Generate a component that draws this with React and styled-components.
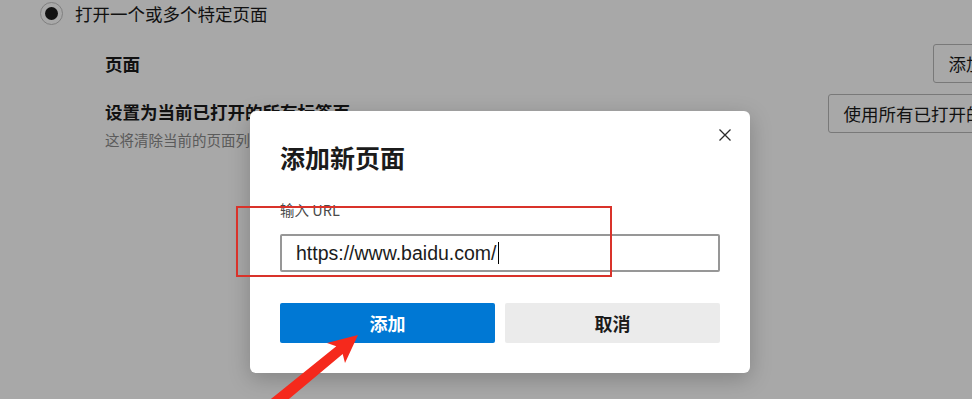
import React from 'react';
import styled, { createGlobalStyle } from 'styled-components';

/* colours */
const ink = '#1b1b1b';
const muted = '#8a8a8a';
const blue = '#0078d4';
const annotation = '#d9322a';

const GlobalStyle = createGlobalStyle`
    html, body {
        margin: 0;
        padding: 0;
    }
    body {
        width: 972px;
        height: 399px;
        overflow: hidden;
        background: #fff;
        font-family: "Noto Sans CJK SC", "Noto Sans", sans-serif;
        color: ${ink};
    }
`;

const Page = styled.div`
    position: relative;
    width: 972px;
    height: 399px;
    overflow: hidden;
    background: #fff;
`;

/* settings page behind the dialog */
const RadioRow = styled.label`
    display: flex;
    align-items: center;
    gap: 12px;
    height: 27px;
    padding-left: 40px;
    font-size: 17.5px;
`;

const Radio = styled.span`
    width: 23px;
    height: 23px;
    box-sizing: border-box;
    border: 1px solid #c2c2c2;
    border-radius: 50%;
    display: flex;
    align-items: center;
    justify-content: center;

    &:after {
        content: '';
        width: 13px;
        height: 13px;
        border-radius: 50%;
        background: ${ink};
    }
`;

const SubList = styled.div`
    margin: 17px 0 0 105px;
    width: 947px;
    display: flex;
    flex-direction: column;
    gap: 11px;
`;

const SettingRow = styled.div`
    display: flex;
    justify-content: space-between;
    align-items: ${p => (p.$top ? 'flex-start' : 'center')};
`;

const SettingText = styled.div`
    display: flex;
    flex-direction: column;
    margin-top: ${p => p.$offset || 0}px;
`;

const SettingTitle = styled.div`
    font-size: 17.5px;
    font-weight: 700;
    line-height: 22px;
`;

const SettingHint = styled.div`
    margin-top: 7px;
    font-size: 14.5px;
    line-height: 20px;
    color: ${muted};
`;

const OutlineButton = styled.button`
    height: 39px;
    padding: 0 15px;
    border: 1px solid #b8b8b8;
    border-radius: 3px;
    background: transparent;
    font-family: inherit;
    font-size: 17.5px;
    color: ${ink};
    white-space: nowrap;
`;

/* modal */
const Overlay = styled.div`
    position: absolute;
    inset: 0;
    background: rgba(0, 0, 0, 0.34);
`;

const Dialog = styled.div`
    position: absolute;
    left: 250px;
    top: 111px;
    width: 500px;
    box-sizing: border-box;
    padding: 30px;
    background: #fff;
    border-radius: 6px;
    box-shadow: 0 6px 22px rgba(0, 0, 0, 0.22);
`;

const Close = styled.button`
    position: absolute;
    top: 16px;
    right: 17px;
    width: 16px;
    height: 16px;
    padding: 0;
    border: none;
    background: none;
    display: flex;
    align-items: center;
    justify-content: center;
`;

const Title = styled.h2`
    margin: 0;
    font-size: 25px;
    line-height: 32px;
    font-weight: 700;
    color: ${ink};
`;

const FieldLabel = styled.div`
    margin-top: 27px;
    font-size: 14.5px;
    line-height: 20px;
    color: #4a4a4a;
`;

const Field = styled.div`
    margin-top: 14px;
    height: 38px;
    box-sizing: border-box;
    border: 2px solid #979797;
    border-radius: 2px;
    padding-left: 14px;
    display: flex;
    align-items: center;
    font-family: "Liberation Sans", "Noto Sans", sans-serif;
    font-size: 19.5px;
    color: ${ink};
`;

const Caret = styled.span`
    display: inline-block;
    width: 1px;
    height: 22px;
    margin-left: 1px;
    background: #000;
`;

const Actions = styled.div`
    margin-top: 31px;
    display: grid;
    grid-template-columns: 1fr 1fr;
    gap: 10px;
`;

const DialogButton = styled.button`
    height: 40px;
    border: none;
    border-radius: 2px;
    font-family: inherit;
    font-size: 18px;
    font-weight: 700;
    background: ${p => (p.$primary ? blue : '#ebebeb')};
    color: ${p => (p.$primary ? '#fff' : ink)};
`;

/* red annotations drawn on top of the screenshot */
const Highlight = styled.div`
    position: absolute;
    left: 236px;
    top: 206px;
    width: 376px;
    height: 71px;
    box-sizing: border-box;
    border: 2px solid ${annotation};
`;

const ArrowLayer = styled.svg`
    position: absolute;
    inset: 0;
    pointer-events: none;
`;

export default function App() {
    return (
        <Page>
            <GlobalStyle />
            <RadioRow>
                <Radio />
                打开一个或多个特定页面
            </RadioRow>
            <SubList>
                <SettingRow>
                    <SettingTitle>页面</SettingTitle>
                    <OutlineButton>添加新页面</OutlineButton>
                </SettingRow>
                <SettingRow $top>
                    <SettingText $offset={7}>
                        <SettingTitle>设置为当前已打开的所有标签页</SettingTitle>
                        <SettingHint>这将清除当前的页面列表</SettingHint>
                    </SettingText>
                    <OutlineButton>使用所有已打开的标签页</OutlineButton>
                </SettingRow>
            </SubList>

            <Overlay>
                <Dialog>
                    <Close aria-label="关闭">
                        <svg width="12" height="12" viewBox="0 0 12 12">
                            <path d="M0.5 0.5 L11.5 11.5 M11.5 0.5 L0.5 11.5" stroke="#2b2b2b" strokeWidth="1.3" fill="none" />
                        </svg>
                    </Close>
                    <Title>添加新页面</Title>
                    <FieldLabel>输入 URL</FieldLabel>
                    <Field>
                        https://www.baidu.com/<Caret />
                    </Field>
                    <Actions>
                        <DialogButton $primary>添加</DialogButton>
                        <DialogButton>取消</DialogButton>
                    </Actions>
                </Dialog>
            </Overlay>

            <Highlight />
            <ArrowLayer width="972" height="399" viewBox="0 0 972 399">
                <polygon
                    points="358,335 345,363 342.7,354.1 261.4,422 253.8,412.8 336.3,346.3 327,343"
                    fill="#f5291c"
                />
            </ArrowLayer>
</Page>
    );
}
